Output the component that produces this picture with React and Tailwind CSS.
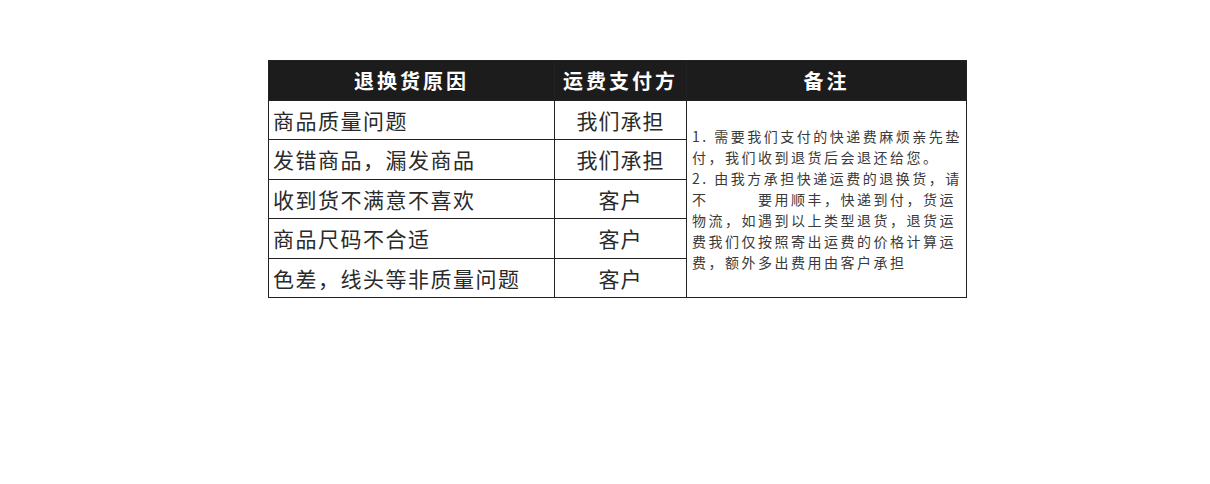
import React from 'react';

const cjk = { fontFamily: '"Noto Sans CJK SC", "Noto Sans", sans-serif' };

const rows = [
  { reason: '商品质量问题', payer: '我们承担', h: 'h-[39px]' },
  { reason: '发错商品，漏发商品', payer: '我们承担', h: 'h-[40px]' },
  { reason: '收到货不满意不喜欢', payer: '客户', h: 'h-[39px]' },
  { reason: '商品尺码不合适', payer: '客户', h: 'h-[40px]' },
  { reason: '色差，线头等非质量问题', payer: '客户', h: 'h-[39px]' },
];

const notes = [
  '1. 需要我们支付的快递费麻烦亲先垫',
  '付，我们收到退货后会退还给您。',
  '2. 由我方承担快递运费的退换货，请',
  '不\u3000\u3000\u3000要用顺丰，快递到付，货运',
  '物流，如遇到以上类型退货，退货运',
  '费我们仅按照寄出运费的价格计算运',
  '费，额外多出费用由客户承担',
];

const App = () => {
  return (
    <div className="min-h-screen w-full bg-white pt-[60px] pl-[268px]" style={cjk}>
      <table className="table-fixed border-collapse w-[698px]">
        <colgroup>
          <col className="w-[286px]" />
          <col className="w-[132px]" />
          <col className="w-[280px]" />
        </colgroup>
        <thead>
          <tr className="h-[40px] bg-[#1c1c1c]">
            <th className="border border-[#222] text-white text-[20px] font-bold tracking-[3px] text-center p-0">
              退换货原因
            </th>
            <th className="border border-[#222] text-white text-[20px] font-bold tracking-[3px] text-center p-0">
              运费支付方
            </th>
            <th className="border border-[#222] text-white text-[20px] font-bold tracking-[3px] text-center p-0">
              备注
            </th>
          </tr>
        </thead>
        <tbody>
          {rows.map((r, i) => (
            <tr key={i} className={r.h}>
              <td className="border border-[#222] pl-[4px] p-0 text-[21px] tracking-[1.5px] text-[#2a2a2a] leading-none whitespace-nowrap">
                {r.reason}
              </td>
              <td className="border border-[#222] p-0 text-center text-[21px] tracking-[1px] text-[#2a2a2a] leading-none">
                {r.payer}
              </td>
              {i === 0 && (
                <td rowSpan={5} className="border border-[#222] pl-[5px] p-0 align-middle">
                  <div className="flex flex-col text-[14px] leading-[21px] tracking-[2.5px] text-[#3a3a3a] whitespace-pre">
                    {notes.map((n, j) => (
                      <span key={j}>{n}</span>
                    ))}
                  </div>
                </td>
              )}
            </tr>
          ))}
        </tbody>
      </table>
    </div>
  );
};

export default App;
